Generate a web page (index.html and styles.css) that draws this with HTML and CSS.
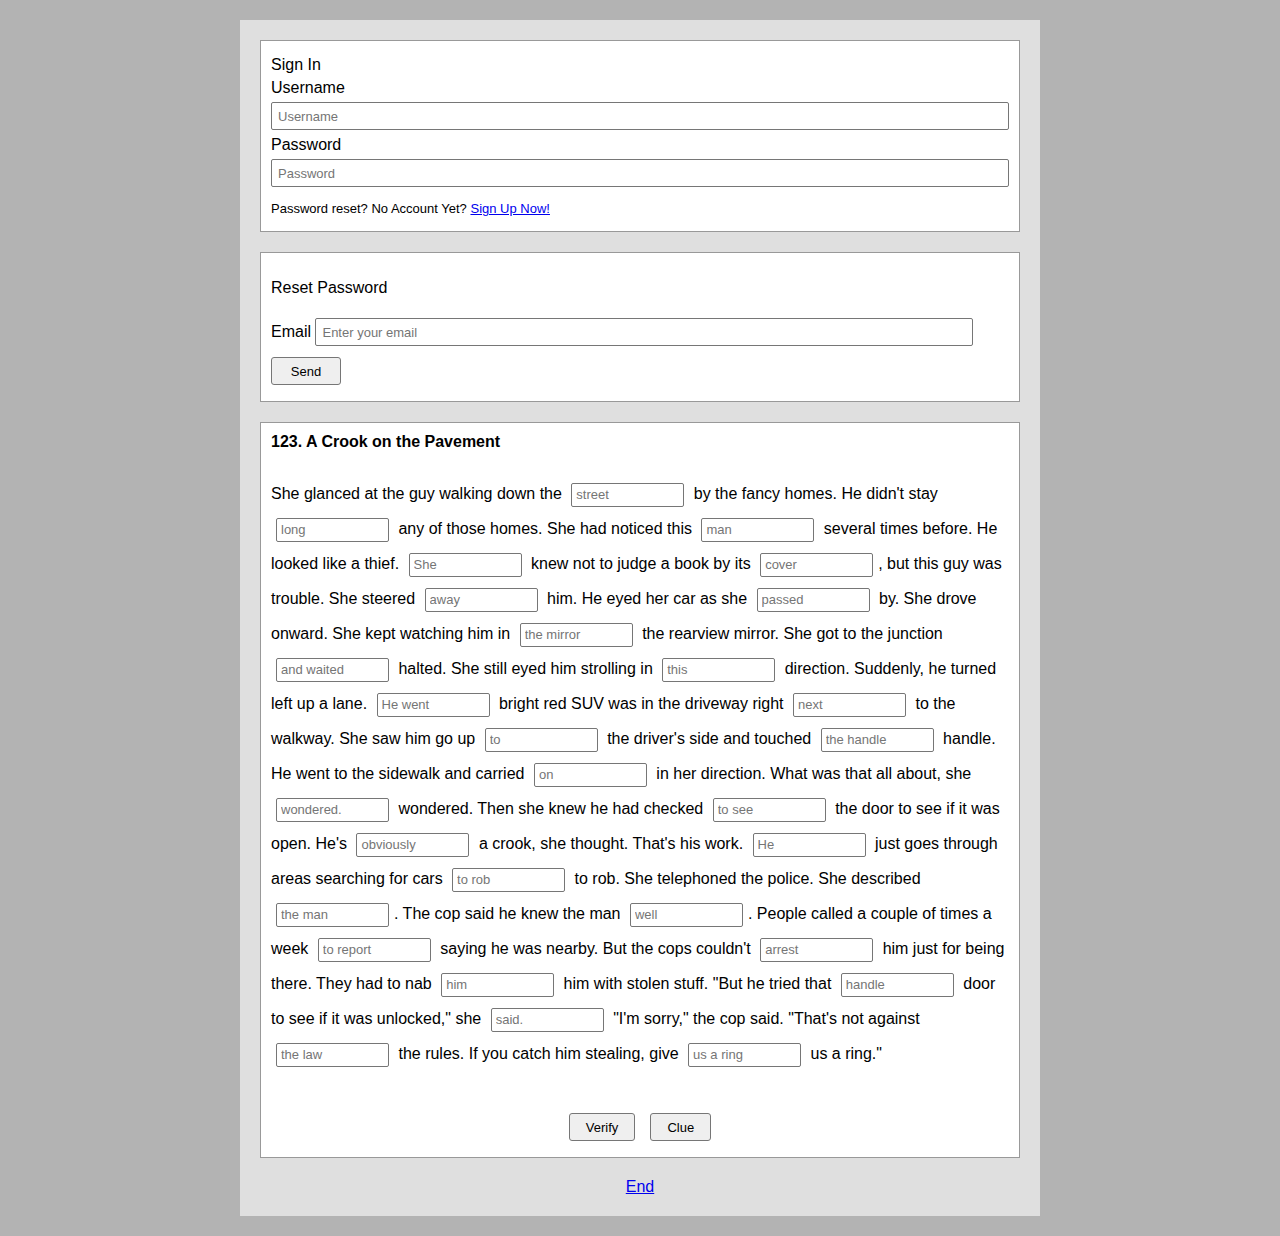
FILE: index.html
```html
<!DOCTYPE html>
<html lang="en">
<head>
<meta charset="utf-8">
<title>A Crook on the Pavement</title>
<link rel="stylesheet" href="styles.css">
</head>
<body>
<div class="page">
  <div class="box signin">
    <div class="signin-title">Sign In</div>
    <label class="lbl">Username</label>
    <input class="field" type="text" placeholder="Username">
    <label class="lbl">Password</label>
    <input class="field" type="password" placeholder="Password">
    <p class="note">Password reset? No Account Yet? <a href="#">Sign Up Now!</a></p>
  </div>

  <div class="box reset">
    <p class="reset-title">Reset Password</p>
    <div class="email-row"><label>Email</label> <input class="email" type="email" placeholder="Enter your email"></div>
    <button class="btn send">Send</button>
  </div>

  <div class="box story">
    <div class="story-title">123. A Crook on the Pavement</div>
    <p class="story-text">She glanced at the guy walking down the <input class="blank" placeholder="street"> by the fancy homes. He didn't stay <input class="blank" placeholder="long"> any of those homes. She had noticed this <input class="blank" placeholder="man"> several times before. He looked like a thief. <input class="blank" placeholder="She"> knew not to judge a book by its <input class="blank" placeholder="cover">, but this guy was trouble. She steered <input class="blank" placeholder="away"> him. He eyed her car as she <input class="blank" placeholder="passed"> by. She drove onward. She kept watching him in <input class="blank" placeholder="the mirror"> the rearview mirror. She got to the junction <input class="blank" placeholder="and waited"> halted. She still eyed him strolling in <input class="blank" placeholder="this"> direction. Suddenly, he turned left up a lane. <input class="blank" placeholder="He went"> bright red SUV was in the driveway right <input class="blank" placeholder="next"> to the walkway. She saw him go up <input class="blank" placeholder="to"> the driver's side and touched <input class="blank" placeholder="the handle"> handle. He went to the sidewalk and carried <input class="blank" placeholder="on"> in her direction. What was that all about, she <input class="blank" placeholder="wondered."> wondered. Then she knew he had checked <input class="blank" placeholder="to see"> the door to see if it was open. He's <input class="blank" placeholder="obviously"> a crook, she thought. That's his work. <input class="blank" placeholder="He"> just goes through areas searching for cars <input class="blank" placeholder="to rob"> to rob. She telephoned the police. She described <input class="blank" placeholder="the man">. The cop said he knew the man <input class="blank" placeholder="well">. People called a couple of times a week <input class="blank" placeholder="to report"> saying he was nearby. But the cops couldn't <input class="blank" placeholder="arrest"> him just for being there. They had to nab <input class="blank" placeholder="him"> him with stolen stuff. "But he tried that <input class="blank" placeholder="handle"> door to see if it was unlocked," she <input class="blank" placeholder="said."> "I'm sorry," the cop said. "That's not against <input class="blank" placeholder="the law"> the rules. If you catch him stealing, give <input class="blank" placeholder="us a ring"> us a ring."</p>
    <div class="actions">
      <button class="btn">Verify</button>
      <button class="btn">Clue</button>
    </div>
  </div>

  <div class="end"><a href="#">End</a></div>
</div>
</body>
</html>
```
FILE: styles.css
```css
html, body {
  margin: 0;
  padding: 0;
}
body {
  background: #b3b3b3;
  font-family: "Liberation Sans", Arial, sans-serif;
  font-size: 16px;
  color: #000;
}
.page {
  width: 800px;
  box-sizing: border-box;
  margin: 20px auto;
  padding: 20px 20px 20px;
  background: #dfdfdf;
}
.box {
  background: #fff;
  border: 1px solid #999;
  padding: 10px;
  margin-bottom: 20px;
}
.signin-title {
  line-height: 27px;
}
.lbl {
  display: block;
  line-height: 19px;
}
.field {
  display: block;
  box-sizing: border-box;
  width: 100%;
  height: 28px;
  margin: 5px 0;
  padding: 0 6px;
  border: 1px solid #767676;
  border-radius: 2px;
  font-family: "Liberation Sans", Arial, sans-serif;
  font-size: 13px;
  background: #fff;
}
.field::placeholder,
.email::placeholder,
.blank::placeholder {
  color: #757575;
}
.note {
  font-size: 13px;
  margin: 14px 0 5px;
}
a {
  color: #0000ee;
}
.reset-title {
  margin: 16px 0;
}
.email {
  box-sizing: border-box;
  width: 658px;
  height: 28px;
  margin: 5px 0;
  padding: 0 6px;
  border: 1px solid #767676;
  border-radius: 2px;
  font-family: "Liberation Sans", Arial, sans-serif;
  font-size: 13px;
  vertical-align: baseline;
}
.btn {
  box-sizing: border-box;
  height: 28px;
  padding: 0 16px;
  background: #efefef;
  border: 1px solid #767676;
  border-radius: 3px;
  font-family: "Liberation Sans", Arial, sans-serif;
  font-size: 13px;
  color: #000;
}
.send {
  display: block;
  width: 70px;
  padding: 0;
  margin: 6px 0 6px;
}
.story-title {
  font-weight: bold;
}
.story-text {
  margin: 25px 0 0;
  line-height: 35px;
}
.blank {
  box-sizing: border-box;
  width: 113px;
  height: 24px;
  margin: 0 5px;
  padding: 0 4px;
  border: 1px solid #767676;
  border-radius: 2px;
  font-family: "Liberation Sans", Arial, sans-serif;
  font-size: 13px;
  background: #fff;
}
.actions {
  display: flex;
  justify-content: center;
  gap: 15px;
  margin: 42px 0 6px;
}
.end {
  text-align: center;
  margin-top: 20px;
}
.page > .box:last-of-type {
  margin-bottom: 0;
}
```
